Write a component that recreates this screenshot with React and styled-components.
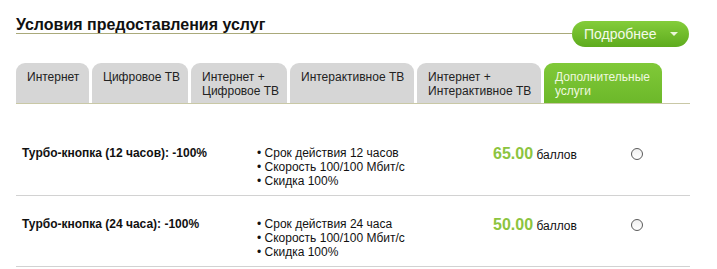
import React from "react";
import styled, { createGlobalStyle } from "styled-components";

const GlobalStyle = createGlobalStyle`
  body {
    margin: 0;
    background: #fff;
    font-family: "Liberation Sans", Arial, sans-serif;
    color: #111;
  }
`;

const Page = styled.div`
  width: 674px;
  padding: 17px 0 0 16px;
`;

const Header = styled.div`
  display: flex;
  align-items: flex-end;
`;

const Title = styled.h2`
  flex: 1;
  margin: 0;
  font-size: 16px;
  line-height: 16px;
  font-weight: bold;
  color: #111;
  border-bottom: 1px solid #aaa97a;
`;

const MoreButton = styled.button`
  display: flex;
  align-items: center;
  gap: 13px;
  height: 26px;
  width: 117px;
  margin: 0 1px -13px 0;
  padding: 0 0 0 12px;
  border: none;
  border-radius: 13px;
  background: linear-gradient(#84cd3a, #5eab1e);
  color: #f4fbe8;
  font-family: "Liberation Sans", Arial, sans-serif;
  font-size: 14px;
`;

const Caret = styled.span`
  width: 0;
  height: 0;
  border-left: 4px solid transparent;
  border-right: 4px solid transparent;
  border-top: 4px solid #eaf6d8;
`;

const Tabs = styled.div`
  display: flex;
  gap: 3px;
  margin-top: 29px;
  border-bottom: 1px solid #c9c8a6;
`;

const Tab = styled.div`
  width: ${(p) => p.$width}px;
  height: 40px;
  box-sizing: border-box;
  padding: 7px 0 0 11px;
  border-radius: 9px 9px 0 0;
  font-size: 12px;
  line-height: 14px;
  white-space: nowrap;
  background: ${(p) => (p.$active ? "linear-gradient(#80c938, #6cb82a)" : "#d6d6d6")};
  color: ${(p) => (p.$active ? "#eef8df" : "#222")};
`;

const Table = styled.div`
  margin-top: 21px;
`;

const Row = styled.div`
  display: grid;
  grid-template-columns: 235px 236px 138px 12px;
  align-items: start;
  padding: 21px 0 7px 6px;
  border-bottom: 1px solid #d2d2d2;
  font-size: 12px;
  line-height: 14px;
  &:first-child {
    padding-top: 21px;
  }
`;

const Name = styled.div`
  font-weight: bold;
  color: #111;
`;

const Features = styled.ul`
  margin: 0;
  padding: 0;
  list-style: none;
  color: #111;
`;

const Price = styled.div`
  padding-top: 1px;
  color: #111;
`;

const Amount = styled.span`
  font-size: 16px;
  font-weight: bold;
  color: #8cc43e;
`;

const Radio = styled.span`
  display: block;
  margin-top: 2px;
  width: 12px;
  height: 12px;
  box-sizing: border-box;
  border: 1px solid #5a5a5a;
  border-radius: 50%;
  background: linear-gradient(#f0f0f0, #fff);
`;

const tabs = [
  { lines: ["Интернет"], width: 73 },
  { lines: ["Цифровое ТВ"], width: 96 },
  { lines: ["Интернет +", "Цифровое ТВ"], width: 96 },
  { lines: ["Интерактивное ТВ"], width: 124 },
  { lines: ["Интернет +", "Интерактивное ТВ"], width: 124 },
  { lines: ["Дополнительные", "услуги"], width: 118 },
];

const services = [
  {
    name: "Турбо-кнопка (12 часов): -100%",
    features: ["Срок действия 12 часов", "Скорость 100/100 Мбит/с", "Скидка 100%"],
    price: "65.00",
  },
  {
    name: "Турбо-кнопка (24 часа): -100%",
    features: ["Срок действия 24 часа", "Скорость 100/100 Мбит/с", "Скидка 100%"],
    price: "50.00",
  },
];

export default function App() {
  return (
    <Page>
      <GlobalStyle />
      <Header>
        <Title>Условия предоставления услуг</Title>
        <MoreButton>
          Подробнее
          <Caret />
        </MoreButton>
      </Header>

      <Tabs>
        {tabs.map((t, i) => (
          <Tab key={i} $width={t.width} $active={i === tabs.length - 1}>
            {t.lines.map((l, j) => (
              <div key={j}>{l}</div>
            ))}
          </Tab>
        ))}
      </Tabs>

      <Table>
        {services.map((s) => (
          <Row key={s.name}>
            <Name>{s.name}</Name>
            <Features>
              {s.features.map((f) => (
                <li key={f}>• {f}</li>
              ))}
            </Features>
            <Price>
              <Amount>{s.price}</Amount> баллов
            </Price>
            <Radio />
          </Row>
        ))}
      </Table>
    </Page>
  );
}
